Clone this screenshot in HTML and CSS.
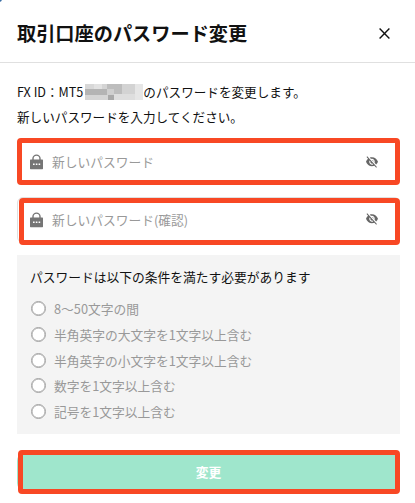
FILE: index.html
```html
<!DOCTYPE html>
<html lang="ja">

<head>
    <meta charset="UTF-8">
    <meta name="viewport" content="width=device-width, initial-scale=1.0">
    <title>取引口座のパスワード変更</title>
    <link rel="stylesheet" href="styles.css">
</head>

<body>

    <!-- アイコン定義 -->
    <svg class="defs" width="0" height="0">
        <symbol id="lock" viewBox="0 0 13 16">
            <path d="M3 7V4.600a3.500 3.500 0 0 1 7 0V7" fill="none" stroke="#757575" stroke-width="1.400"/>
            <rect x="0" y="5.600" width="13" height="9.600" rx=".6" fill="#757575"/>
            <path d="M3 9.600h1.600v1.400H3zM5.800 9.600h1.600v1.400H5.800zM8.600 9.600h1.600v1.400H8.600z" fill="#fff"/>
        </symbol>
        <symbol id="eyeOff" viewBox="1 2.5 22 20" preserveAspectRatio="none">
            <path fill="#666" d="M12 7c2.760 0 5 2.240 5 5 0 .650-.130 1.260-.360 1.830l2.920 2.920c1.510-1.260 2.700-2.890 3.430-4.750-1.730-4.390-6-7.500-11-7.500-1.400 0-2.740.250-3.980.700l2.160 2.160C10.740 7.130 11.350 7 12 7zM2 4.270l2.280 2.280.460.460C3.080 8.300 1.780 10.020 1 12c1.730 4.390 6 7.500 11 7.500 1.550 0 3.030-.300 4.380-.840l.420.420L19.730 22 21 20.730 3.270 3 2 4.270zM7.530 9.800l1.550 1.550c-.050.210-.080.430-.080.650 0 1.660 1.340 3 3 3 .220 0 .440-.030.650-.080l1.550 1.550c-.670.330-1.410.530-2.200.530-2.760 0-5-2.240-5-5 0-.790.200-1.530.530-2.200zm4.310-.780l3.150 3.150.020-.160c0-1.660-1.340-3-3-3l-.170.010z"/>
        </symbol>
    </svg>

    <div class="modal">
        <div class="header">
            <h1>取引口座のパスワード変更</h1>
            <svg class="close" width="11" height="11" viewBox="0 0 11 11">
                <path d="M.6 .6L10.400 10.400M10.400 .6L.6 10.400" stroke="#111" stroke-width="1.400"/>
            </svg>
        </div>

        <div class="content">
            <p class="lead">FX ID：MT5<svg class="mask" width="58" height="16" viewBox="0 0 58 16" shape-rendering="crispEdges">
                <rect width="58" height="16" fill="#dedede"/>
                <rect width="9" height="5" fill="#d8d8d8"/>
                <rect x="9" width="8" height="5" fill="#e2e2e2"/>
                <rect x="17" width="5" height="5" fill="#d4d4d4"/>
                <rect x="22" width="15" height="10" fill="#bdbdbd"/>
                <rect x="37" width="13" height="10" fill="#d3d3d3"/>
                <rect x="50" width="8" height="16" fill="#e6e6e6"/>
                <rect y="5" width="22" height="6" fill="#b4b4b4"/>
                <rect x="22" y="5" width="7" height="6" fill="#cfcfcf"/>
                <rect y="11" width="23" height="5" fill="#d5d5d5"/>
                <rect x="23" y="11" width="6" height="5" fill="#a9a9a9"/>
            </svg>のパスワードを変更します。<br>新しいパスワードを入力してください。</p>

            <div class="field marked">
                <svg class="lock"><use href="#lock"/></svg>
                <span>新しいパスワード</span>
                <svg class="eye"><use href="#eyeOff"/></svg>
            </div>

            <div class="field marked confirm">
                <svg class="lock"><use href="#lock"/></svg>
                <span>新しいパスワード(確認)</span>
                <svg class="eye"><use href="#eyeOff"/></svg>
            </div>

            <!-- パスワードの条件 -->
            <div class="rules">
                <p>パスワードは以下の条件を満たす必要があります</p>
                <ul>
                    <li>8〜50文字の間</li>
                    <li>半角英字の大文字を1文字以上含む</li>
                    <li>半角英字の小文字を1文字以上含む</li>
                    <li>数字を1文字以上含む</li>
                    <li>記号を1文字以上含む</li>
                </ul>
            </div>

            <button class="submit marked">変更</button>
        </div>
    </div>

</body>

</html>
```
FILE: styles.css
```css
* {
    margin: 0;
    padding: 0;
    box-sizing: border-box;
}

body {
    background-color: #fff;
    color: #111;
    font-family: "Noto Sans CJK JP", sans-serif;
    font-size: 12.75px;
    overflow: hidden;
}

.defs {
    position: absolute;
}

.modal {
    height: 503px;
    /* 左上の角から見える背景 */
    background: radial-gradient(circle at 0 0, #3b6fa5 1.2px, transparent 2.2px);
}

/* ヘッダー */
.header {
    display: flex;
    justify-content: space-between;
    align-items: center;
    height: 63px;
    padding: 4px 25px 0 17px;
    border-bottom: 1px solid #e0e0e0;
}

.header h1 {
    font-size: 19.2px;
    line-height: 28px;
    font-weight: 700;
}

.close {
    margin-top: 1px;
}

.content {
    padding: 16px 15px 0 17px;
}

.lead {
    height: 60px;
    font-size: 12.6px;
    line-height: 25px;
    white-space: nowrap;
}

.mask {
    vertical-align: -3px;
    margin-left: 2px;
}

/* 入力欄 */
.field {
    position: relative;
    display: flex;
    align-items: center;
    height: 46px;
    padding: 0 21px 0 12px;
    border: 1px solid #e0e0e0;
    border-radius: 6px;
    color: #999;
}

.field span {
    flex: 1;
    margin-left: 9px;
    line-height: 20px;
}

.lock {
    width: 13px;
    height: 16px;
    margin-bottom: 1px;
}

.eye {
    width: 12px;
    height: 12px;
}

.confirm {
    margin-top: 12px;
}

.confirm .eye {
    margin-bottom: 2px;
}

/* 赤い枠 */
.marked::after {
    content: "";
    position: absolute;
    top: -2px;
    right: -1px;
    bottom: -1px;
    left: -1px;
    border: 5px solid #f84824;
    border-radius: 4px;
}

.confirm::after {
    top: 0;
    left: 1px;
    bottom: -3px;
}

/* 条件 */
.rules {
    height: 179px;
    margin-top: 12px;
    padding: 12px 13px 0;
    background-color: #f4f4f4;
}

.rules p {
    line-height: 20px;
}

.rules ul {
    margin-top: 9px;
    list-style: none;
}

.rules li {
    display: flex;
    align-items: center;
    height: 25.7px;
    color: #999;
}

.rules li::before {
    content: "";
    flex: none;
    width: 13px;
    height: 13px;
    margin: 0 8px 0 1px;
    border: 1px solid #a2a2a2;
    border-radius: 50%;
    background-color: #fff;
    box-shadow: inset 0 0 0 .5px #a2a2a2;
}

/* 変更ボタン */
.submit {
    position: relative;
    display: block;
    width: 100%;
    height: 38px;
    margin-top: 19px;
    padding-bottom: 2px;
    border: none;
    border-radius: 8px;
    background-color: #9fe6cc;
    color: #fff;
    font-family: inherit;
    font-size: 12.8px;
    font-weight: 700;
}

.submit::after {
    top: -3px;
    right: 0;
    bottom: -3px;
    left: 1px;
}
```
